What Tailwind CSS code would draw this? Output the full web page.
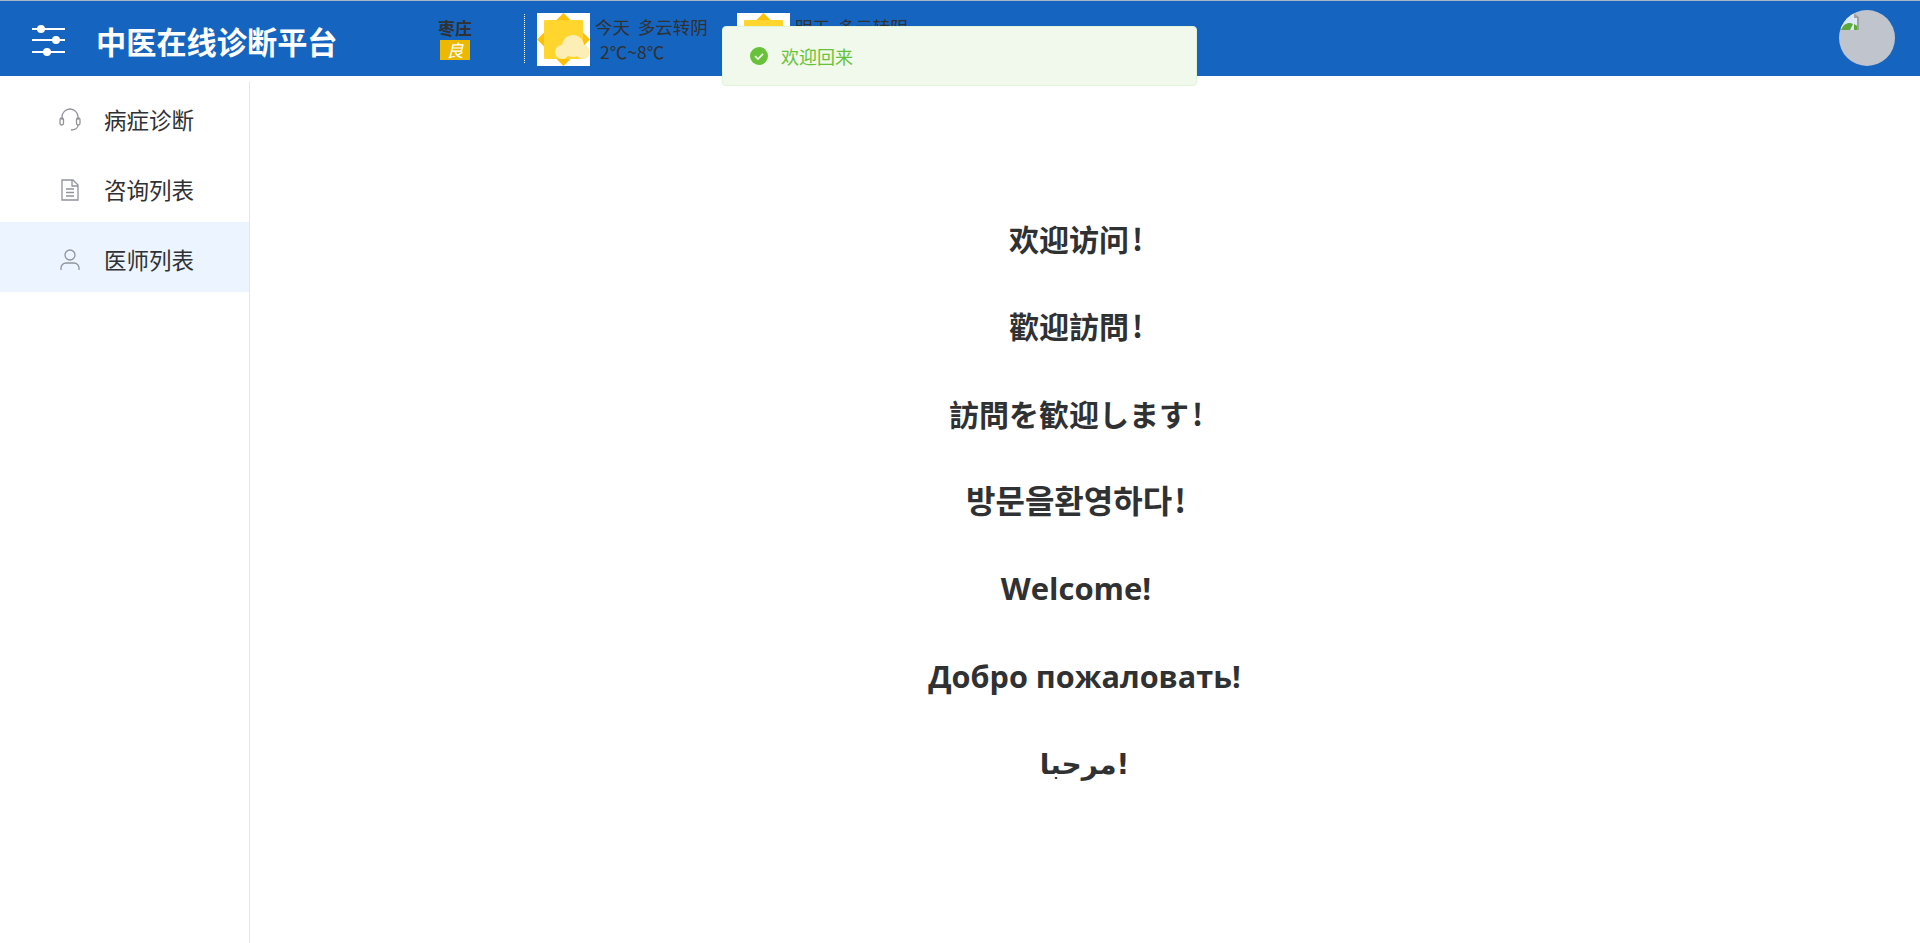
<!DOCTYPE html>
<html lang="zh">
<head>
  <meta charset="UTF-8">
  <title>中医在线诊断平台</title>
  <script src="https://cdn.jsdelivr.net/npm/@tailwindcss/browser@4"></script>
</head>
<body class="h-screen overflow-hidden bg-white font-['Noto_Sans_CJK_SC','Noto_Sans',sans-serif] text-[#303133]">
  <!-- Header -->
  <header class="relative flex h-[76px] items-center border-t border-[#a9b6c8] bg-[#1565c0]">
    <svg class="mt-[4px] ml-[32px] h-[33px] w-[34px]" viewBox="0 0 34 33" fill="white">
      <rect x="0" y="4" width="33" height="2"/><circle cx="9" cy="5" r="4"/>
      <rect x="0" y="15" width="33" height="2"/><circle cx="24" cy="16" r="4"/>
      <rect x="0" y="27" width="33" height="2"/><circle cx="15" cy="28" r="4"/>
    </svg>
    <h1 class="mt-[6px] ml-[30px] w-[342px] text-[30.2px] leading-none font-bold text-white">中医在线诊断平台</h1>

    <!-- City -->
    <div class="flex w-[34px] flex-col items-center">
      <span class="text-[17px] leading-[22px] font-bold whitespace-nowrap">枣庄</span>
      <span class="mt-[1px] h-[20px] w-[30px] bg-[#ecb900] text-center text-[17px] leading-[20px] text-white italic">良</span>
    </div>
    <div class="ml-[52px] h-[49px] border-l border-dotted border-white"></div>

    <!-- Weather -->
    <div class="ml-[12px] flex items-start gap-[5px]">
      <svg class="mt-[2px] h-[53px] w-[53px] bg-white" viewBox="0 0 53 53">
        <polygon points="26.5,0 53,26.5 26.5,53 0,26.5" fill="#ffc107"/>
        <rect x="7" y="7" width="39" height="39" rx="1" fill="#ffd52e"/>
        <g fill="#fdeeb5"><circle cx="36" cy="33" r="11"/><circle cx="25" cy="39" r="7"/><circle cx="46" cy="39" r="7"/></g>
      </svg>
      <div class="w-[137px] pt-[3px] text-[17.5px] leading-[25px] text-[#303133]">
        <div class="whitespace-pre">今天  多云转阴</div>
        <div class="pl-[5px]">2℃~8℃</div>
      </div>
      <svg class="mt-[2px] h-[53px] w-[53px] bg-white" viewBox="0 0 53 53">
        <polygon points="26.5,0 53,26.5 26.5,53 0,26.5" fill="#ffc107"/>
        <rect x="7" y="7" width="39" height="39" rx="1" fill="#ffd52e"/>
      </svg>
      <div class="pt-[3px] text-[17.5px] leading-[25px] whitespace-pre">明天  多云转阴</div>
    </div>

    <!-- Avatar, with the browser's broken image mark -->
    <div class="absolute top-[9px] right-[25px] h-[56px] w-[56px] overflow-hidden rounded-full bg-[#c0c4cc]">
      <svg class="mt-[3px] ml-[1px] h-[17px] w-[20px]" viewBox="0 0 20 17">
        <path d="M1 0h13l5 4v13H1z" fill="#dbe8fb"/>
        <path d="M1 17c3-7 8-8 12-6l-3 6z" fill="#5da83a"/>
        <path d="M14 11l5 3v3h-5z" fill="#5da83a"/>
        <path d="M14 0l5 4v13h-2V5h-3z" fill="#a0a0a0"/>
      </svg>
    </div>
  </header>

  <!-- Toast -->
  <div class="absolute top-[26px] left-[722px] z-10 flex h-[60px] w-[475px] items-center rounded-[4px] border border-[#e1f3d8] bg-[#f0f9eb] pl-[27px]">
    <svg class="h-[18px] w-[18px]" viewBox="0 0 18 18">
      <circle cx="9" cy="9" r="9" fill="#67c23a"/>
      <path d="M5 9.2l3 2.8 5-5.2" fill="none" stroke="#f0f9eb" stroke-width="1.8"/>
    </svg>
    <span class="ml-[13px] text-[18px] text-[#67c23a]">欢迎回来</span>
  </div>

  <div class="flex h-[867px]">
    <!-- Sidebar -->
    <aside class="mt-[6px] w-[250px] shrink-0 border-r border-[#e6e6e6]">
      <a class="flex h-[70px] items-center pt-[6px] pl-[58px] text-[22.5px]">
        <svg class="h-[24px] w-[24px]" viewBox="0 0 24 24" fill="none" stroke="#909399" stroke-width="1.3">
          <path d="M4 12V9a8 8 0 0 1 16 0v3"/>
          <rect x="2" y="10" width="3.5" height="7" rx="1.7"/>
          <rect x="18.5" y="10" width="3.5" height="7" rx="1.7"/>
          <path d="M20 17c0 3-3 5-7 5"/>
        </svg>
        <span class="ml-[22px]">病症诊断</span>
      </a>
      <a class="flex h-[70px] items-center pt-[6px] pl-[58px] text-[22.5px]">
        <svg class="h-[24px] w-[24px]" viewBox="0 0 24 24" fill="none" stroke="#909399" stroke-width="1.3">
          <path d="M4 2h11l5 5v15H4z"/>
          <path d="M14 2v6h6M8 11h8M8 14.5h8M8 18h8"/>
        </svg>
        <span class="ml-[22px]">咨询列表</span>
      </a>
      <a class="flex h-[70px] items-center bg-[#ecf5ff] pt-[6px] pl-[58px] text-[22.5px]">
        <svg class="h-[24px] w-[24px]" viewBox="0 0 24 24" fill="none" stroke="#909399" stroke-width="1.3">
          <circle cx="12" cy="7" r="5"/>
          <path d="M3 22v-2a5 5 0 0 1 5-5h8a5 5 0 0 1 5 5v2"/>
        </svg>
        <span class="ml-[22px]">医师列表</span>
      </a>
    </aside>

    <!-- Welcome text -->
    <main class="flex flex-1 flex-col items-center gap-[47.5px] pt-[142px] pr-[18px] text-[30px] leading-[40px] font-bold text-[#303133]">
      <p>欢迎访问<span class="ml-[3px]">!</span></p>
      <p class="-mt-[1px] mb-[1px] font-['Noto_Sans_CJK_TC',sans-serif]">歡迎訪問<span class="ml-[3px]">!</span></p>
      <p class="font-['Noto_Sans_CJK_JP',sans-serif]">訪問を歓迎します<span class="ml-[3px]">!</span></p>
      <p class="-mt-[2px] mb-[2px] font-['Noto_Sans_CJK_KR',sans-serif] text-[32px]">방문을환영하다<span class="ml-[2px]">!</span></p>
      <p class="font-['Open_Sans',sans-serif] text-[31px]">Welcome!</p>
      <p class="ml-[17px] font-['Open_Sans',sans-serif] text-[30.6px]">Добро пожаловать!</p>
      <p class="mt-[2px] ml-[17px] font-['DejaVu_Sans',sans-serif] text-[28px]">مرحبا!</p>
    </main>
  </div>
</body>
</html>
